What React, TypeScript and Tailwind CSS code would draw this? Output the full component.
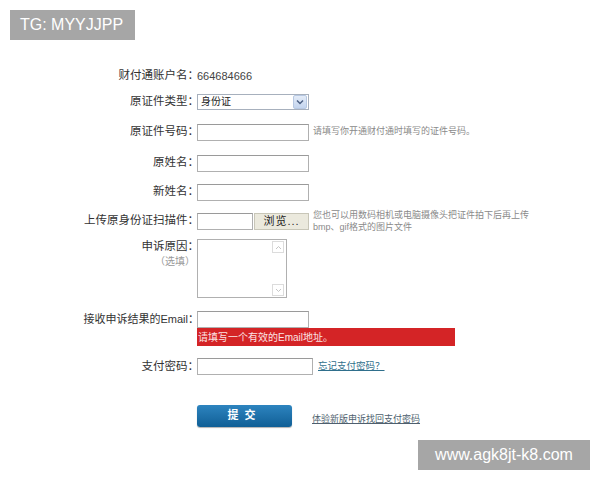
import React from 'react'

const font = { fontFamily: '"Liberation Sans", "Noto Sans CJK SC", sans-serif' }

function Label({ children }: { children: React.ReactNode }) {
  return (
    <div className="w-[197px] shrink-0 text-right text-[11.5px] text-[#333]">
      <span className="relative left-[2px]">{children}</span>
    </div>
  )
}

function Input({ w = 'w-[112px]' }: { w?: string }) {
  return <div className={`${w} h-[17px] border border-[#b0b0b0] border-t-[#9a9a9a] bg-white`} />
}

export default function App() {
  return (
    <div className="relative w-[600px] h-[480px] bg-white overflow-hidden" style={font}>
      {/* form */}
      <div className="flex flex-col pt-[62px]">
        <div className="flex items-center h-[28px]">
          <Label>财付通账户名：</Label>
          <span className="text-[11px] text-[#444]">664684666</span>
        </div>

        <div className="flex items-center h-[24px]">
          <Label>原证件类型：</Label>
          <div className="flex items-center w-[112px] h-[16px] border border-[#a7b0bd] bg-white">
            <span className="flex-1 pl-[3px] text-[10px] text-[#222] leading-none">身份证</span>
            <div className="flex items-center justify-center w-[14px] h-[14px] mr-[1px] bg-gradient-to-b from-[#e4ecf8] to-[#c3d4ee] border border-[#b7c8e2] rounded-[2px]">
              <svg width="8" height="6" viewBox="0 0 8 6">
                <path d="M1 1.5 L4 4.5 L7 1.5" fill="none" stroke="#4d6185" strokeWidth="1.5" />
              </svg>
            </div>
          </div>
        </div>

        <div className="flex items-center h-[36px]">
          <Label>原证件号码：</Label>
          <Input />
          <span className="ml-[4px] text-[9px] text-[#8a8a8a]">请填写你开通财付通时填写的证件号码。</span>
        </div>

        <div className="flex items-center h-[26px]">
          <Label>原姓名：</Label>
          <Input />
        </div>

        <div className="flex items-center h-[32px]">
          <Label>新姓名：</Label>
          <Input />
        </div>

        <div className="flex items-center h-[26px]">
          <Label>上传原身份证扫描件：</Label>
          <Input w="w-[56px]" />
          <div className="ml-[1px] w-[55px] h-[17px] flex items-center justify-center bg-[#ebe9dd] border border-[#c8c6b8] text-[11px] text-[#222] tracking-[1px]">
            浏览...
          </div>
          <div className="ml-[4px] whitespace-nowrap text-[9px] leading-[12px] text-[#8a8a8a]">
            <div>您也可以用数码相机或电脑摄像头把证件拍下后再上传</div>
            <div>bmp、gif格式的图片文件</div>
          </div>
        </div>

        <div className="flex items-start mt-[5px]">
          <div className="w-[197px] shrink-0 text-right text-[11.5px] text-[#333] leading-[14px]">
            <div className="relative left-[2px]">申诉原因：</div>
            <div className="text-[10px] text-[#999] pr-[2px] mt-[2px]">（选填）</div>
          </div>
          <div className="flex w-[90px] h-[59px] border border-[#b0b0b0] bg-white">
            <div className="flex-1" />
            <div className="w-[14px] flex flex-col justify-between items-center py-[1px] mr-[1px]">
              <div className="w-[12px] h-[12px] border border-[#dcdcdc] flex items-center justify-center">
                <svg width="7" height="5" viewBox="0 0 7 5"><path d="M1 4 L3.5 1.5 L6 4" fill="none" stroke="#c5c5c5" strokeWidth="1" /></svg>
              </div>
              <div className="w-[12px] h-[12px] border border-[#dcdcdc] flex items-center justify-center">
                <svg width="7" height="5" viewBox="0 0 7 5"><path d="M1 1 L3.5 3.5 L6 1" fill="none" stroke="#c5c5c5" strokeWidth="1" /></svg>
              </div>
            </div>
          </div>
        </div>

        <div className="flex items-start mt-[13px]">
          <div className="w-[197px] shrink-0 text-right text-[11px] text-[#333] leading-[17px]">
            <span className="relative left-[2px]">接收申诉结果的Email：</span>
          </div>
          <div className="flex flex-col">
            <Input />
            <div className="w-[258px] h-[18px] bg-[#d42426] flex items-center pl-[1px] text-[10px] text-[#fbe3e3]">
              请填写一个有效的Email地址。
            </div>
          </div>
        </div>

        <div className="flex items-center mt-[12px] h-[17px]">
          <Label>支付密码：</Label>
          <Input w="w-[116px]" />
          <a className="ml-[5px] text-[9.5px] text-[#2f6f8c] underline">忘记支付密码？</a>
        </div>

        <div className="flex items-center mt-[29px] h-[23px]">
          <div className="w-[197px] shrink-0" />
          <div className="w-[95px] h-[22px] rounded-[3px] bg-gradient-to-b from-[#2d84bf] to-[#0f5f96] flex items-center justify-center text-[11px] font-bold text-white tracking-[6px] shadow-[0_1px_1px_rgba(0,0,0,0.3)]">
            提交
          </div>
          <a className="ml-[20px] mt-[8px] text-[9px] text-[#4e5f6e] underline">体验新版申诉找回支付密码</a>
        </div>
      </div>

      {/* watermarks */}
      <div className="absolute left-[10px] top-[10px] w-[125px] h-[30px] bg-[#a6a6a6] text-white text-[16px] flex items-center pl-[10px]">
        TG: MYYJJPP
      </div>
      <div className="absolute left-[418px] top-[440px] w-[172px] h-[30px] bg-[#a6a6a6] text-white text-[16px] flex items-center justify-center">
        www.agk8jt-k8.com
      </div>
    </div>
  )
}
